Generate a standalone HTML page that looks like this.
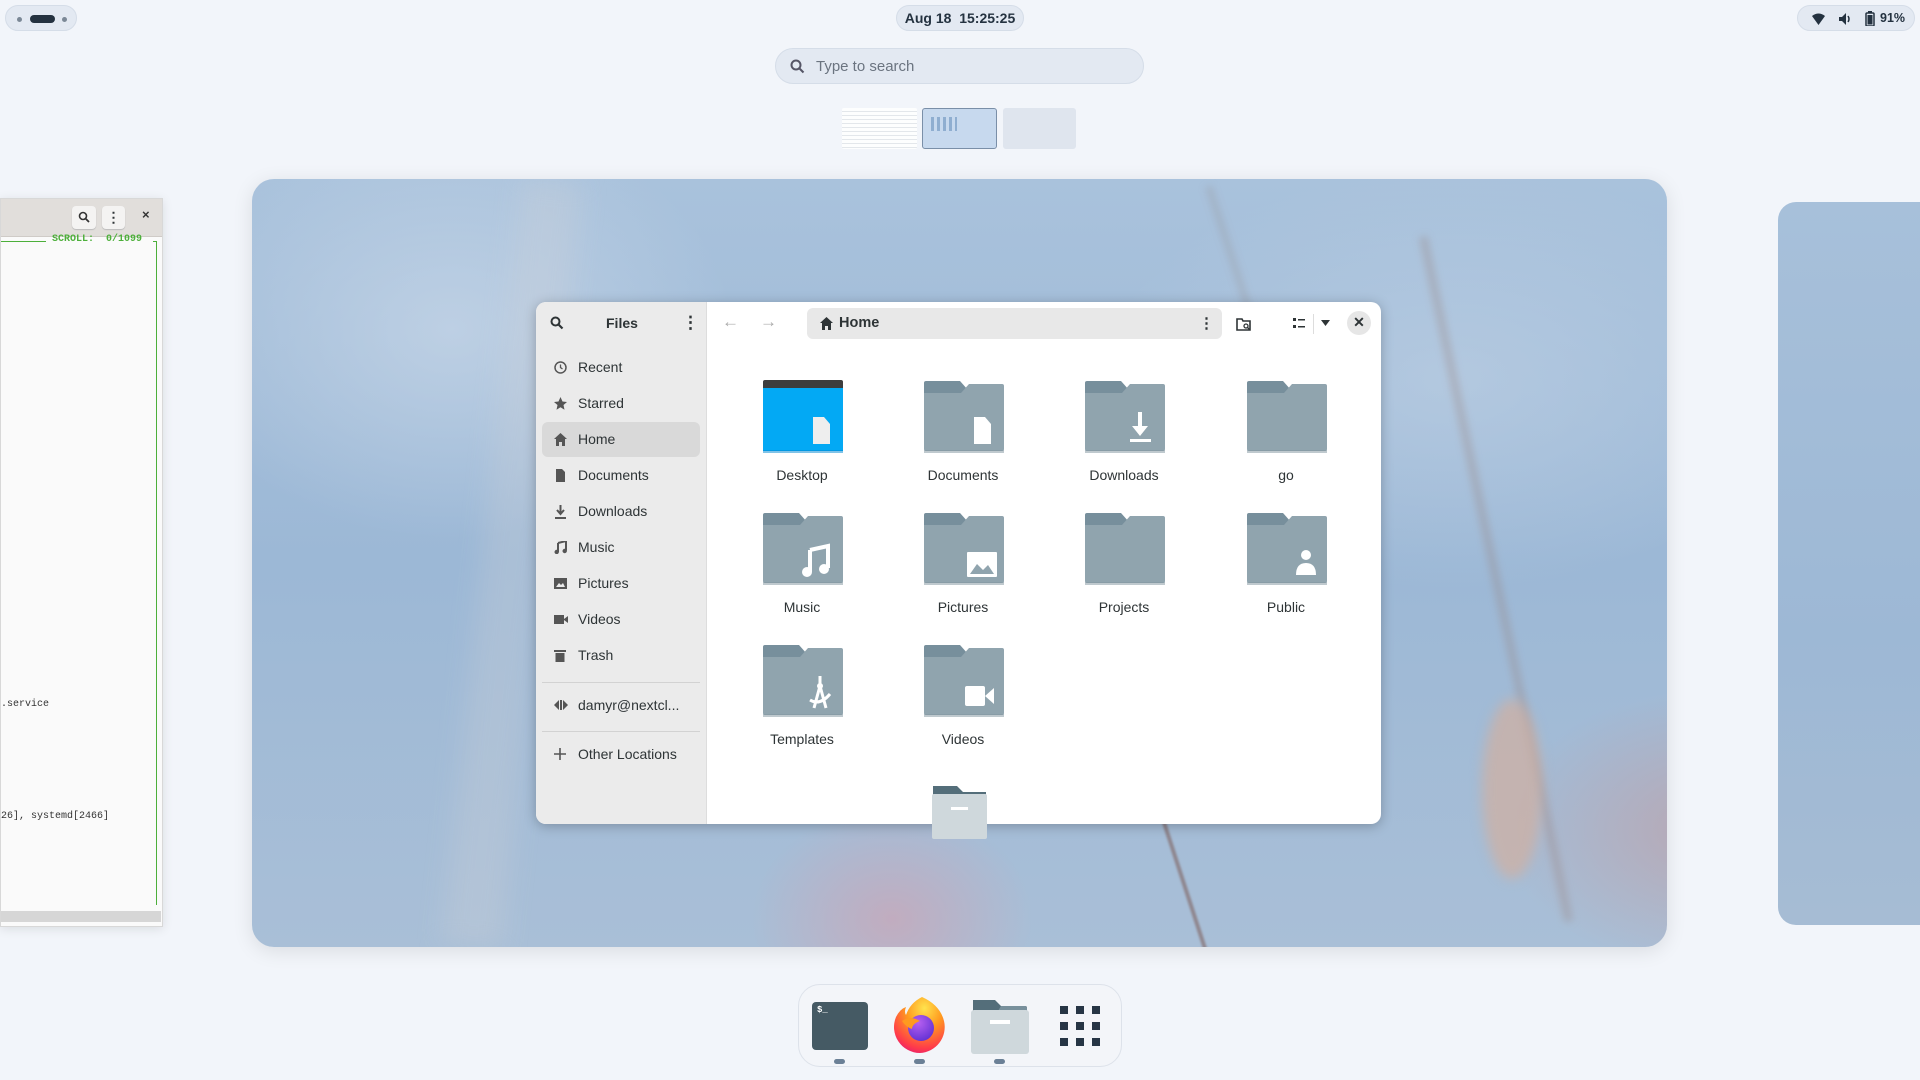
<!DOCTYPE html>
<html><head><meta charset="utf-8"><style>
*{box-sizing:border-box;margin:0;padding:0}
body{width:1920px;height:1080px;overflow:hidden;background:#f2f5fa;font-family:"Liberation Sans",sans-serif;position:relative;color:#2e3436}
.abs{position:absolute}
.pill{position:absolute;background:#e3e9f2;border:1px solid #d5dde8;border-radius:10px}
.wall{left:252px;top:179px;width:1415px;height:768px;border-radius:22px;overflow:hidden;
background:
radial-gradient(ellipse 300px 200px at 1460px 650px,rgba(200,150,150,.55),transparent 70%),
radial-gradient(ellipse 200px 160px at 640px 740px,rgba(210,160,175,.6),transparent 70%),
radial-gradient(ellipse 400px 300px at 200px 150px,rgba(200,215,232,.7),transparent 70%),
radial-gradient(ellipse 500px 300px at 1200px 200px,rgba(190,208,228,.6),transparent 70%),
linear-gradient(180deg,#a9c2dc 0%,#9cb8d6 50%,#a9bfd7 100%);box-shadow:0 4px 20px rgba(0,0,0,.1)}
.win{left:536px;top:302px;width:845px;height:522px;border-radius:10px;overflow:hidden;background:#fff;box-shadow:0 2px 12px rgba(0,0,0,.25)}
.side{position:absolute;left:0;top:0;width:171px;height:100%;background:#ebebeb;border-right:1px solid #ddd}
.si{position:absolute;left:6px;width:158px;height:35px;border-radius:6px;font-size:14px;color:#2e3436;line-height:35px;padding-left:36px}
.si svg{position:absolute;left:12px;top:11px}
.fi{position:absolute;width:140px;text-align:center;font-size:14px;color:#2e3436}
.fi svg{display:block;margin:0 auto 14px}
</style></head><body>
<svg width="0" height="0" style="position:absolute"><defs>
<symbol id="fold" viewBox="0 0 81 73"><path d="M1 3a2 2 0 0 1 2-2h34l8 9v8H1z" fill="#778f9c"/><path d="M1 13h37l8-9h33a2 2 0 0 1 2 2v63a2 2 0 0 1-2 2H3a2 2 0 0 1-2-2z" fill="#90a4ae"/><rect x="1" y="70" width="80" height="3" fill="#7f939d" opacity=".5"/></symbol>
</defs></svg>

<!-- top bar -->
<div class="pill" style="left:5px;top:5px;width:72px;height:26px;border-radius:13px">
<div class="abs" style="left:11px;top:11px;width:5px;height:5px;border-radius:3px;background:#7b8896"></div>
<div class="abs" style="left:24px;top:9px;width:25px;height:8px;border-radius:4px;background:#243240"></div>
<div class="abs" style="left:56px;top:11px;width:5px;height:5px;border-radius:3px;background:#7b8896"></div></div>
<div class="pill" style="left:896px;top:5px;width:128px;height:26px;border-radius:13px;font-size:14px;font-weight:bold;line-height:24px;text-align:center;color:#243240">Aug 18&nbsp; 15:25:25</div>
<div class="pill" style="left:1797px;top:5px;width:118px;height:26px;border-radius:13px;font-size:12.5px;font-weight:bold;color:#243240">
<svg class="abs" style="left:14px;top:7px" width="13" height="12" viewBox="0 0 13 12"><path d="M0 3Q6.5-2 13 3L6.5 12z" fill="#243240"/></svg>
<svg class="abs" style="left:40px;top:6px" width="14" height="14" viewBox="0 0 14 14"><path d="M1 5h3l4-4v12L4 9H1z" fill="#243240"/><path d="M10 4q2 3 0 6" stroke="#243240" fill="none" stroke-width="1.5"/></svg>
<svg class="abs" style="left:67px;top:5px" width="10" height="15" viewBox="0 0 10 15"><rect x="3" y="0" width="4" height="2" fill="#243240"/><rect x="1" y="2" width="8" height="13" rx="1" fill="none" stroke="#243240" stroke-width="1.5"/><rect x="2.5" y="4" width="5" height="9.5" fill="#243240"/></svg>
<span class="abs" style="left:82px;top:5px">91%</span></div>

<!-- search -->
<div class="pill" style="left:775px;top:48px;width:369px;height:36px;border-radius:18px">
<svg class="abs" style="left:14px;top:10px" width="15" height="15" viewBox="0 0 15 15"><circle cx="6" cy="6" r="4.5" fill="none" stroke="#556" stroke-width="2"/><path d="M9.5 9.5l4 4" stroke="#556" stroke-width="2"/></svg>
<span class="abs" style="left:40px;top:9px;font-size:15px;color:#6b7480">Type to search</span></div>

<!-- workspaces -->
<div class="abs" style="left:842px;top:108px;width:75px;height:41px;background:#fff;border-radius:2px;background-image:repeating-linear-gradient(180deg,#fff 0 3px,#e2e6ea 3px 4px);opacity:.9"></div>
<div class="abs" style="left:922px;top:108px;width:75px;height:41px;background:#c7d9ee;border:1px solid #7a8fa8;border-radius:3px"><div class="abs" style="left:8px;top:8px;width:26px;height:14px;background:repeating-linear-gradient(90deg,#8faed0 0 3px,transparent 3px 6px)"></div></div>
<div class="abs" style="left:1003px;top:108px;width:73px;height:41px;background:#dfe5ee;border-radius:3px"></div>

<!-- left terminal window -->
<div class="abs" style="left:0;top:198px;width:163px;height:729px;background:#fafafa;border:1px solid #d8d8d8;box-shadow:0 2px 10px rgba(0,0,0,.1);overflow:hidden">
<div class="abs" style="left:0;top:0;width:162px;height:38px;background:#e1dedb;border-bottom:1px solid #cfcbc7"></div>
<div class="abs" style="left:71px;top:7px;width:24px;height:23px;background:#f4f3f2;border-radius:4px;box-shadow:0 1px 1px #bbb"><svg style="margin:5px 6px" width="12" height="12" viewBox="0 0 12 12"><circle cx="5" cy="5" r="3.5" fill="none" stroke="#333" stroke-width="1.6"/><path d="M7.5 7.5l3.5 3.5" stroke="#333" stroke-width="1.8"/></svg></div>
<div class="abs" style="left:101px;top:7px;width:23px;height:23px;background:#f4f3f2;border-radius:4px;box-shadow:0 1px 1px #bbb;font-size:14px;text-align:center;line-height:22px;font-weight:bold">⋮</div>
<div class="abs" style="left:141px;top:8px;font-size:13px;font-weight:bold;color:#333">×</div>
<div class="abs" style="left:0;top:42px;width:45px;height:1px;background:#4caf3a"></div>
<div class="abs" style="left:51px;top:35px;font-family:'Liberation Mono',monospace;font-size:10px;font-weight:bold;color:#4caf3a;white-space:pre">SCROLL:  0/1099</div>
<div class="abs" style="left:152px;top:42px;width:4px;height:1px;background:#4caf3a"></div>
<div class="abs" style="left:155px;top:42px;width:1px;height:664px;background:#4caf3a"></div>
<div class="abs" style="left:0;top:500px;font-family:'Liberation Mono',monospace;font-size:10px;color:#333">.service</div>
<div class="abs" style="left:0;top:612px;font-family:'Liberation Mono',monospace;font-size:10px;color:#333;white-space:pre">26], systemd[2466]</div>
<div class="abs" style="left:0;top:712px;width:160px;height:11px;background:#d6d6d6"></div>
</div>

<!-- right window edge -->
<div class="abs" style="left:1778px;top:202px;width:160px;height:723px;border-radius:18px 0 0 18px;background:linear-gradient(180deg,#a7c0da,#9db8d5 60%,#a6bcd4)"></div>

<!-- main wallpaper -->
<div class="abs wall">
<div class="abs" style="left:1240px;top:50px;width:8px;height:700px;background:rgba(150,120,110,.3);transform:rotate(-12deg);filter:blur(4px)"></div>
<div class="abs" style="left:1000px;top:0;width:6px;height:300px;background:rgba(140,120,110,.25);transform:rotate(-18deg);filter:blur(4px)"></div>
<div class="abs" style="left:930px;top:630px;width:4px;height:150px;background:rgba(120,80,70,.5);transform:rotate(-18deg);filter:blur(1px)"></div>
<div class="abs" style="left:1230px;top:520px;width:60px;height:180px;border-radius:50%;background:rgba(210,175,160,.7);filter:blur(6px)"></div>
<div class="abs" style="left:230px;top:0;width:60px;height:768px;background:rgba(210,210,215,.25);transform:rotate(6deg);filter:blur(12px)"></div>
</div>

<!-- files window -->
<div class="abs win">
<div class="side">
<svg class="abs" style="left:14px;top:14px" width="14" height="14" viewBox="0 0 14 14"><circle cx="5.5" cy="5.5" r="4" fill="none" stroke="#2e3436" stroke-width="2"/><path d="M8.5 8.5l4 4" stroke="#2e3436" stroke-width="2.2"/></svg>
<div class="abs" style="left:70px;top:13px;font-size:14px;font-weight:bold">Files</div>
<div class="abs" style="left:146px;top:11px;font-size:17px;font-weight:bold">⋮</div>
<div class="si" style="top:48px"><svg width="13" height="13" viewBox="0 0 13 13"><circle cx="6.5" cy="6.5" r="5.5" fill="none" stroke="#555" stroke-width="1.5"/><path d="M6.5 3.5v3l2 1.5" stroke="#555" fill="none" stroke-width="1.3"/></svg>Recent</div>
<div class="si" style="top:84px"><svg width="13" height="13" viewBox="0 0 13 13"><path d="M6.5 0l2 4.5 4.5.5-3.5 3 1 4.8-4-2.5-4 2.5 1-4.8L0 5l4.5-.5z" fill="#555"/></svg>Starred</div>
<div class="si" style="top:120px;background:#d9d9d9"><svg width="13" height="13" viewBox="0 0 13 13"><path d="M6.5 0L13 6h-2v7H8V9H5v4H2V6H0z" fill="#555"/></svg>Home</div>
<div class="si" style="top:156px"><svg width="13" height="13" viewBox="0 0 13 13"><path d="M2 0h6l3 3v10H2z" fill="#555"/></svg>Documents</div>
<div class="si" style="top:192px"><svg width="13" height="14" viewBox="0 0 13 14"><path d="M6.5 0v8M3 5l3.5 4 3.5-4" stroke="#555" fill="none" stroke-width="2"/><rect x="1" y="12" width="11" height="2" fill="#555"/></svg>Downloads</div>
<div class="si" style="top:228px"><svg width="13" height="13" viewBox="0 0 13 13"><path d="M4 2l8-2v9.5" stroke="#555" stroke-width="2" fill="none"/><path d="M4 2v9" stroke="#555" stroke-width="2"/><circle cx="2.7" cy="11" r="2.2" fill="#555"/><circle cx="10.7" cy="10" r="2.2" fill="#555"/></svg>Music</div>
<div class="si" style="top:264px"><svg width="13" height="13" viewBox="0 0 13 13"><rect x="0" y="1" width="13" height="11" fill="#555"/><path d="M2 10l3-4 2 2 2-2 2 4z" fill="#ebebeb"/></svg>Pictures</div>
<div class="si" style="top:300px"><svg width="14" height="13" viewBox="0 0 14 13"><rect x="0" y="2" width="10" height="9" fill="#555"/><path d="M10 6l4-3v7l-4-3z" fill="#555"/></svg>Videos</div>
<div class="si" style="top:336px"><svg width="12" height="13" viewBox="0 0 12 13"><rect x="0" y="1" width="12" height="2" fill="#555"/><rect x="1.5" y="4" width="9" height="9" fill="#555"/></svg>Trash</div>
<div class="abs" style="left:6px;top:380px;width:158px;height:1px;background:#d2d2d2"></div>
<div class="si" style="top:386px"><svg width="14" height="12" viewBox="0 0 14 12"><path d="M0 6l5-5v10zM14 6l-5-5v10z" fill="#555"/><rect x="6" y="1" width="2" height="10" fill="#555"/></svg>damyr@nextcl...</div>
<div class="abs" style="left:6px;top:429px;width:158px;height:1px;background:#d2d2d2"></div>
<div class="si" style="top:435px"><svg width="12" height="12" viewBox="0 0 12 12"><path d="M6 0v12M0 6h12" stroke="#555" stroke-width="1.6"/></svg>Other Locations</div>
</div>
<!-- header -->
<div class="abs" style="left:186px;top:10px;font-size:17px;color:#aaa">←</div>
<div class="abs" style="left:224px;top:10px;font-size:17px;color:#aaa">→</div>
<div class="abs" style="left:271px;top:6px;width:415px;height:31px;background:#e8e8e8;border-radius:6px">
<svg class="abs" style="left:13px;top:9px" width="13" height="13" viewBox="0 0 13 13"><path d="M6.5 0L13 6h-2v7H8V9H5v4H2V6H0z" fill="#2e3436"/></svg>
<span class="abs" style="left:32px;top:7px;font-size:14.5px;font-weight:bold">Home</span>
<span class="abs" style="left:392px;top:6px;font-size:15px;font-weight:bold">⋮</span></div>
<svg class="abs" style="left:700px;top:14px" width="16" height="16" viewBox="0 0 16 16"><path d="M1 3h5l1 2h7v9H1z" fill="none" stroke="#2e3436" stroke-width="1.6"/><circle cx="10" cy="10" r="2" fill="none" stroke="#2e3436" stroke-width="1.3"/><path d="M11.5 11.5l2 2" stroke="#2e3436" stroke-width="1.3"/></svg>
<svg class="abs" style="left:757px;top:16px" width="12" height="11" viewBox="0 0 12 11"><rect x="0" y="0" width="3" height="3" fill="#2e3436"/><rect x="5" y="1" width="7" height="1.5" fill="#2e3436"/><rect x="0" y="7" width="3" height="3" fill="#2e3436"/><rect x="5" y="8" width="7" height="1.5" fill="#2e3436"/></svg>
<div class="abs" style="left:777px;top:12px;width:1px;height:20px;background:#ddd"></div>
<svg class="abs" style="left:785px;top:18px" width="9" height="6" viewBox="0 0 9 6"><path d="M0 0h9L4.5 6z" fill="#2e3436"/></svg>
<div class="abs" style="left:811px;top:9px;width:24px;height:24px;border-radius:12px;background:#e6e6e6;text-align:center;line-height:23px;font-size:14px;font-weight:bold">✕</div>
<!-- grid -->
<div class="fi" style="left:196px;top:78px"><svg width="81" height="73" viewBox="0 0 81 73"><rect x="1" y="0" width="80" height="10" rx="2" fill="#3d3d3d"/><rect x="1" y="8" width="80" height="63" fill="#03a9f4"/><rect x="1" y="70" width="80" height="3" fill="#0288d1" opacity=".5"/><path d="M51 37h11l6 7v20H51z" fill="#eee"/></svg>Desktop</div>
<div class="fi" style="left:357px;top:78px"><svg width="81" height="73"><use href="#fold"/><path d="M51 37h11l6 7v20H51z" fill="#fff"/></svg>Documents</div>
<div class="fi" style="left:518px;top:78px"><svg width="81" height="73"><use href="#fold"/><path d="M56 32v18" stroke="#fff" stroke-width="4"/><path d="M48 46l8 10 8-10z" fill="#fff"/><rect x="46" y="59" width="21" height="3" fill="#fff"/></svg>Downloads</div>
<div class="fi" style="left:680px;top:78px"><svg width="81" height="73"><use href="#fold"/></svg>go</div>
<div class="fi" style="left:196px;top:210px"><svg width="81" height="73"><use href="#fold"/><path d="M48 38l18-4v22" stroke="#fff" stroke-width="4" fill="none"/><path d="M48 38v22" stroke="#fff" stroke-width="4"/><circle cx="45" cy="60" r="5" fill="#fff"/><circle cx="62" cy="57" r="5" fill="#fff"/></svg>Music</div>
<div class="fi" style="left:357px;top:210px"><svg width="81" height="73"><use href="#fold"/><rect x="44" y="40" width="30" height="25" rx="1" fill="#fff"/><path d="M47 62l7-10 6 6 5-5 6 9z" fill="#90a4ae"/></svg>Pictures</div>
<div class="fi" style="left:518px;top:210px"><svg width="81" height="73"><use href="#fold"/></svg>Projects</div>
<div class="fi" style="left:680px;top:210px"><svg width="81" height="73"><use href="#fold"/><circle cx="60" cy="43" r="5" fill="#fff"/><path d="M50 63q0-12 10-12t10 12z" fill="#fff"/></svg>Public</div>
<div class="fi" style="left:196px;top:342px"><svg width="81" height="73"><use href="#fold"/><path d="M58 32v8M52 64l6-22 6 22M48 56q10 6 20-6" stroke="#fff" stroke-width="3" fill="none"/><circle cx="58" cy="42" r="3" fill="#fff"/></svg>Templates</div>
<div class="fi" style="left:357px;top:342px"><svg width="81" height="73"><use href="#fold"/><rect x="42" y="42" width="20" height="20" rx="2" fill="#fff"/><path d="M62 52l9-8v16z" fill="#fff"/></svg>Videos</div>
</div>
<!-- dragged folder -->
<svg class="abs" style="left:931px;top:784px" width="57" height="56" viewBox="0 0 57 56"><path d="M2 2h24l6 6h23v20H2z" fill="#546e7a"/><rect x="1" y="10" width="55" height="45" rx="2" fill="#cfd8dc"/><rect x="20" y="23" width="17" height="3" fill="#fff"/></svg>

<!-- dock -->
<div class="abs" style="left:798px;top:984px;width:324px;height:83px;border-radius:22px;background:#f3f5f9;border:1px solid #dde2ea"></div>
<div class="abs" style="left:812px;top:1002px;width:56px;height:48px;border-radius:4px;background:#455a64"><span class="abs" style="left:5px;top:3px;font-family:'Liberation Mono',monospace;font-size:9px;color:#fff;font-weight:bold">$_</span></div>
<svg class="abs" style="left:890px;top:995px" width="60" height="60" viewBox="0 0 60 60"><defs><radialGradient id="ff" cx=".6" cy=".2" r=".9"><stop offset="0" stop-color="#ffe34d"/><stop offset=".4" stop-color="#ff9a1f"/><stop offset=".8" stop-color="#ff3b4a"/><stop offset="1" stop-color="#e0157a"/></radialGradient><radialGradient id="fp" cx=".4" cy=".3" r=".8"><stop offset="0" stop-color="#b760f0"/><stop offset="1" stop-color="#5b2dd1"/></radialGradient></defs><path d="M30 58A26 26 0 0 1 6 22q4-8 10-10-2 5 0 8 4-12 16-18 18 8 22 24a26 26 0 0 1-24 32z" fill="url(#ff)"/><circle cx="31" cy="33" r="13" fill="url(#fp)"/><path d="M12 26q8-6 18 0-8 3-8 8-6-2-10-8z" fill="#ff9a1f"/></svg>
<svg class="abs" style="left:971px;top:1000px" width="58" height="54" viewBox="0 0 58 54"><path d="M2 0h22l6 6h24a2 2 0 0 1 2 2v20H2z" fill="#546e7a"/><path d="M30 6h24a2 2 0 0 1 2 2v8H24z" fill="#78909c"/><rect x="0" y="10" width="58" height="44" rx="3" fill="#cfd8dc"/><rect x="19" y="20" width="20" height="4" fill="#fff"/></svg>
<div class="abs" style="left:1060px;top:1006px;width:42px;height:42px;background:
linear-gradient(#263545,#263545) 0 0/8px 8px no-repeat,linear-gradient(#263545,#263545) 16px 0/8px 8px no-repeat,linear-gradient(#263545,#263545) 32px 0/8px 8px no-repeat,
linear-gradient(#263545,#263545) 0 16px/8px 8px no-repeat,linear-gradient(#263545,#263545) 16px 16px/8px 8px no-repeat,linear-gradient(#263545,#263545) 32px 16px/8px 8px no-repeat,
linear-gradient(#263545,#263545) 0 32px/8px 8px no-repeat,linear-gradient(#263545,#263545) 16px 32px/8px 8px no-repeat,linear-gradient(#263545,#263545) 32px 32px/8px 8px no-repeat"></div>
<div class="abs" style="left:834px;top:1059px;width:11px;height:5px;border-radius:3px;background:#6b8096"></div>
<div class="abs" style="left:914px;top:1059px;width:11px;height:5px;border-radius:3px;background:#6b8096"></div>
<div class="abs" style="left:994px;top:1059px;width:11px;height:5px;border-radius:3px;background:#6b8096"></div>
</body></html>
